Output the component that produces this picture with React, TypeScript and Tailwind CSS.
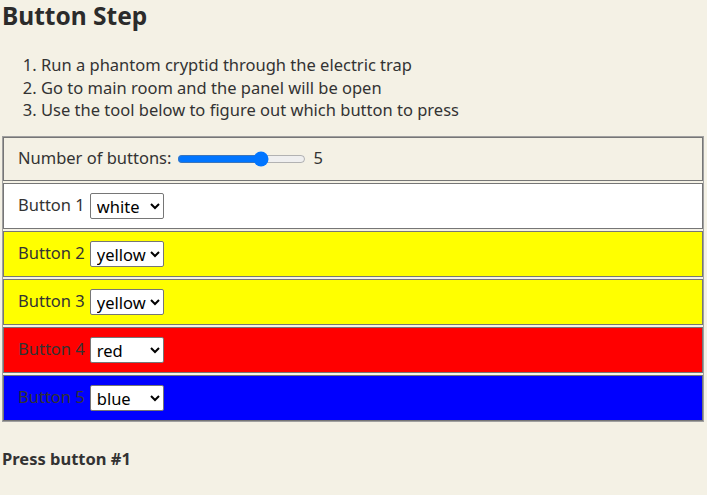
import React from "react";

const rows = [
  { label: "Button 1", color: "white", bg: "bg-white" },
  { label: "Button 2", color: "yellow", bg: "bg-[#ffff00]" },
  { label: "Button 3", color: "yellow", bg: "bg-[#ffff00]" },
  { label: "Button 4", color: "red", bg: "bg-[#ff0000]" },
  { label: "Button 5", color: "blue", bg: "bg-[#0000ff]" },
];

const colors = ["white", "yellow", "red", "blue", "black"];

export default function App() {
  return (
    <div className="min-h-[495px] w-full bg-[#f4f1e5] px-[2px] text-[16.5px] text-[#333333] font-['Noto_Sans',sans-serif]">
      <h1 className="text-[24.5px] font-bold leading-[32px] text-[#2b2b2b]">Button Step</h1>

      {/* Steps */}
      <ol className="mt-[22px] list-decimal pl-[39px] leading-[22.5px]">
        <li>Run a phantom cryptid through the electric trap</li>
        <li>Go to main room and the panel will be open</li>
        <li>Use the tool below to figure out which button to press</li>
      </ol>

      {/* Table */}
      <div className="mt-[14px] flex w-[702px] flex-col gap-[2px] border border-[#a0a0a0]">
        <div className="flex h-[44px] items-center border border-[#767676] pl-[14px]">
          <span>Number of buttons:</span>
          <input
            type="range"
            min={1}
            max={7}
            defaultValue={5}
            className="ml-[6px] mr-[7px] w-[129px] accent-[#0075ff]"
          />
          <span>5</span>
        </div>
        {rows.map((r) => (
          <div
            key={r.label}
            className={`flex h-[46px] items-center border border-[#767676] pl-[14px] ${r.bg}`}
          >
            <span className="mr-[5px]">{r.label}</span>
            <select
              defaultValue={r.color}
              className="h-[26px] w-[74px] rounded-[2px] border border-[#767676] bg-white pl-[2px] text-[16.5px] text-black"
            >
              {colors.map((c) => (
                <option key={c} value={c}>
                  {c}
                </option>
              ))}
            </select>
          </div>
        ))}
      </div>

      <p className="mt-[25px] font-bold">Press button #1</p>
    </div>
  );
}
